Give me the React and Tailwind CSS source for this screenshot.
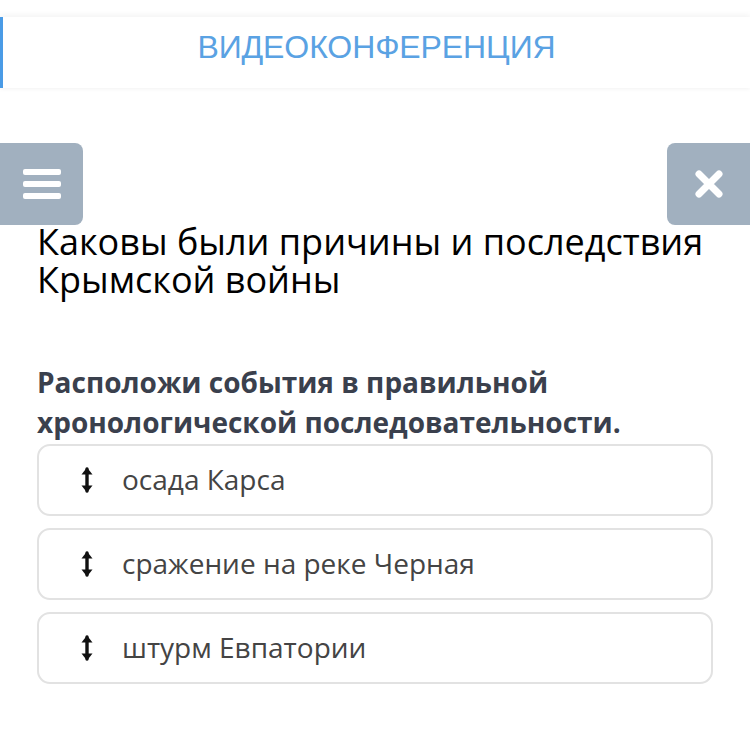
import React from "react";

const items = ["осада Карса", "сражение на реке Черная", "штурм Евпатории"];

function MoveIcon() {
  return (
    <svg width="14" height="28" viewBox="0 0 14 28" className="shrink-0">
      <path d="M7 3v22" stroke="#111" strokeWidth="3.4" strokeLinecap="round" />
      <path d="M1.5 8.5L7 1.5 12.5 8.5z" fill="#111" />
      <path d="M1.5 19.5L7 26.5 12.5 19.5z" fill="#111" />
    </svg>
  );
}

export default function App() {
  return (
    <div className="w-[750px] h-[750px] bg-white overflow-hidden font-['Open_Sans',sans-serif]">
      <div className="pt-[17px]">
        <div className="h-[71px] border-l-[3px] border-[#4a9be6] shadow-[0_-2px_6px_rgba(0,0,0,0.05),0_2px_4px_rgba(0,0,0,0.03)] flex items-center justify-center">
          <span className="font-['Liberation_Sans',Arial,sans-serif] text-[32px] text-[#5aa2e3] tracking-[-0.1px] mb-[12px]">
            ВИДЕОКОНФЕРЕНЦИЯ
          </span>
        </div>
      </div>

      <div className="mt-[55px] flex justify-between">
        <button className="w-[83px] h-[82px] bg-[#a1b0bf] rounded-r-[8px] flex flex-col items-center justify-center gap-[6px]">
          <span className="block w-[38px] h-[6px] bg-white rounded-[2px]" />
          <span className="block w-[38px] h-[6px] bg-white rounded-[2px]" />
          <span className="block w-[38px] h-[6px] bg-white rounded-[2px]" />
        </button>
        <button className="w-[83px] h-[82px] bg-[#a1b0bf] rounded-l-[8px] flex items-center justify-center">
          <svg width="30" height="30" viewBox="0 0 30 30">
            <path d="M5 5L25 25M25 5L5 25" stroke="#fff" strokeWidth="7" strokeLinecap="round" />
          </svg>
        </button>
      </div>

      <div className="px-[37px]">
        <h1 className="text-[36px] leading-[38px] text-black font-normal -mt-[2px]">
          Каковы были причины и последствия Крымской войны
        </h1>
        <p className="mt-[63px] text-[28px] leading-[40px] font-bold text-[#3a404d]">
          Расположи события в правильной хронологической последовательности.
        </p>
        <div className="mt-[2px] flex flex-col gap-[12px]">
          {items.map((t) => (
            <div key={t} className="h-[72px] border-2 border-[#e2e2e2] rounded-[13px] flex items-center pl-[41px] gap-[28px]">
              <MoveIcon />
              <span className="text-[28px] text-[#444] mb-[2px]">{t}</span>
            </div>
          ))}
        </div>
      </div>
    </div>
  );
}
